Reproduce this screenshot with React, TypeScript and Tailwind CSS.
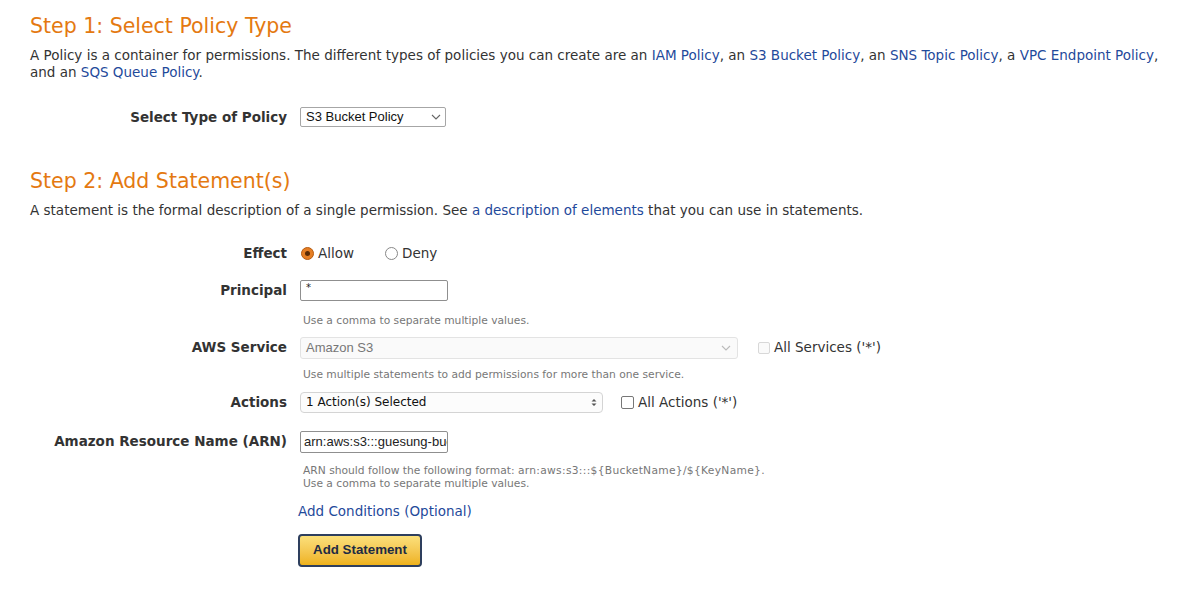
import React from "react";

const font = { fontFamily: '"DejaVu Sans", Verdana, sans-serif' };

function Row({ label, children, className = "" }: { label: string; children: React.ReactNode; className?: string }) {
  return (
    <div className={"flex items-center " + className}>
      <div className="w-[257px] shrink-0 text-right font-bold text-[13.5px] text-[#333]">{label}</div>
      <div className="ml-[13px] flex items-center">{children}</div>
    </div>
  );
}

function Hint({ children }: { children: React.ReactNode }) {
  return <div className="ml-[273px] text-[10.7px] leading-[13px] text-[#777]">{children}</div>;
}

const A = ({ children }: { children: React.ReactNode }) => <span className="text-[#1f4a9b]">{children}</span>;

export default function App() {
  return (
    <div className="w-[1200px] h-[595px] bg-white text-[#333] overflow-hidden" style={font}>
      <div className="pl-[30px] pt-[11px]">
        <h1 className="text-[20.5px] leading-[30px] text-[#e47911]">Step 1: Select Policy Type</h1>
        <p className="mt-[6px] text-[13.5px] leading-[17px] pr-[30px]">
          A Policy is a container for permissions. The different types of policies you can create are an <A>IAM Policy</A>, an <A>S3 Bucket Policy</A>, an <A>SNS Topic Policy</A>, a <A>VPC Endpoint Policy</A>, and an <A>SQS Queue Policy</A>.
        </p>
      </div>

      <div className="mt-[26px] flex items-center">
        <div className="w-[287px] shrink-0 text-right font-bold text-[13.5px]">Select Type of Policy</div>
        <div className="ml-[13px] w-[146px] h-[20px] border border-[#a6a6a6] rounded-[2px] flex items-center justify-between pl-[5px] pr-[4px] text-[13px] text-[#111]" style={{ fontFamily: '"Liberation Sans", Arial, sans-serif' }}>
          <span>S3 Bucket Policy</span>
          <svg width="10" height="6" viewBox="0 0 10 6"><path d="M1 1l4 4 4-4" fill="none" stroke="#666" strokeWidth="1.1" /></svg>
        </div>
      </div>

      <div className="pl-[30px] mt-[39px]">
        <h1 className="text-[20.5px] leading-[30px] text-[#e47911]">Step 2: Add Statement(s)</h1>
        <p className="mt-[6px] text-[13.5px] leading-[17px]">
          A statement is the formal description of a single permission. See <A>a description of elements</A> that you can use in statements.
        </p>
      </div>

      <div className="pl-[30px] mt-[24px]">
        <Row label="Effect">
          <span className="w-[13px] h-[13px] rounded-full bg-[#e57e24] border border-[#b65b10] flex items-center justify-center ml-[1px]">
            <span className="w-[5px] h-[5px] rounded-full bg-[#5a2a05]" />
          </span>
          <span className="ml-[4px] text-[13.5px]">Allow</span>
          <span className="ml-[31px] w-[13px] h-[13px] rounded-full border border-[#888] bg-white" />
          <span className="ml-[4px] text-[13.5px]">Deny</span>
        </Row>

        <Row label="Principal" className="mt-[16px]">
          <div className="w-[148px] h-[21px] border border-[#8f8f8f] rounded-[2px] pl-[5px] text-[10px] leading-[14px] text-[#222]">*</div>
        </Row>
        <Hint><div className="mt-[13px]">Use a comma to separate multiple values.</div></Hint>

        <Row label="AWS Service" className="mt-[10px]">
          <div className="w-[438px] h-[22px] border border-[#e3e3e3] rounded-[3px] bg-[#fafafa] flex items-center justify-between pl-[5px] pr-[6px] text-[13px] text-[#777]" style={{ fontFamily: '"Liberation Sans", Arial, sans-serif' }}>
            <span>Amazon S3</span>
            <svg width="10" height="6" viewBox="0 0 10 6"><path d="M1 1l4 4 4-4" fill="none" stroke="#bbb" strokeWidth="1.1" /></svg>
          </div>
          <span className="ml-[20px] w-[12px] h-[12px] border border-[#d8d8d8] rounded-[2px] bg-[#fafafa]" />
          <span className="ml-[4px] text-[13.5px]">All Services ('*')</span>
        </Row>
        <Hint><div className="mt-[9px]">Use multiple statements to add permissions for more than one service.</div></Hint>

        <Row label="Actions" className="mt-[11px]">
          <div className="w-[303px] h-[21px] border border-[#d4d4d4] rounded-[4px] bg-[#fcfcfc] flex items-center justify-between pl-[5px] pr-[5px] text-[12px] text-[#111]">
            <span>1 Action(s) Selected</span>
            <svg width="6" height="9" viewBox="0 0 6 9"><path d="M0.5 3.5L3 1l2.5 2.5zM0.5 5.5L3 8l2.5-2.5z" fill="#555" /></svg>
          </div>
          <span className="ml-[18px] w-[13px] h-[13px] border border-[#777] rounded-[2px] bg-white" />
          <span className="ml-[4px] text-[13.5px]">All Actions ('*')</span>
        </Row>

        <Row label="Amazon Resource Name (ARN)" className="mt-[18px]">
          <div className="w-[148px] h-[22px] border border-[#8f8f8f] rounded-[2px] pl-[3px] text-[13px] leading-[20px] text-[#222] overflow-hidden whitespace-nowrap" style={{ fontFamily: '"Liberation Sans", Arial, sans-serif' }}>arn:aws:s3:::guesung-bucket</div>
        </Row>
        <Hint>
          <div className="mt-[11px]">ARN should follow the following format: <span className="tracking-[0.3px]">arn:aws:s3:::${"{"}BucketName{"}"}/${"{"}KeyName{"}"}</span>.</div>
          <div>Use a comma to separate multiple values.</div>
        </Hint>

        <div className="ml-[268px] mt-[12px] text-[13.5px] leading-[18px] text-[#1f4a9b]">Add Conditions (Optional)</div>

        <div className="ml-[268px] mt-[14px]">
          <button className="w-[124px] h-[33px] rounded-[4px] border-2 border-[#2e3f5e] bg-gradient-to-b from-[#fbe07a] to-[#eeb218] text-[13.3px] font-bold text-[#1e2b44]" style={{ fontFamily: '"Liberation Sans", Arial, sans-serif' }}>Add Statement</button>
        </div>
      </div>
    </div>
  );
}
